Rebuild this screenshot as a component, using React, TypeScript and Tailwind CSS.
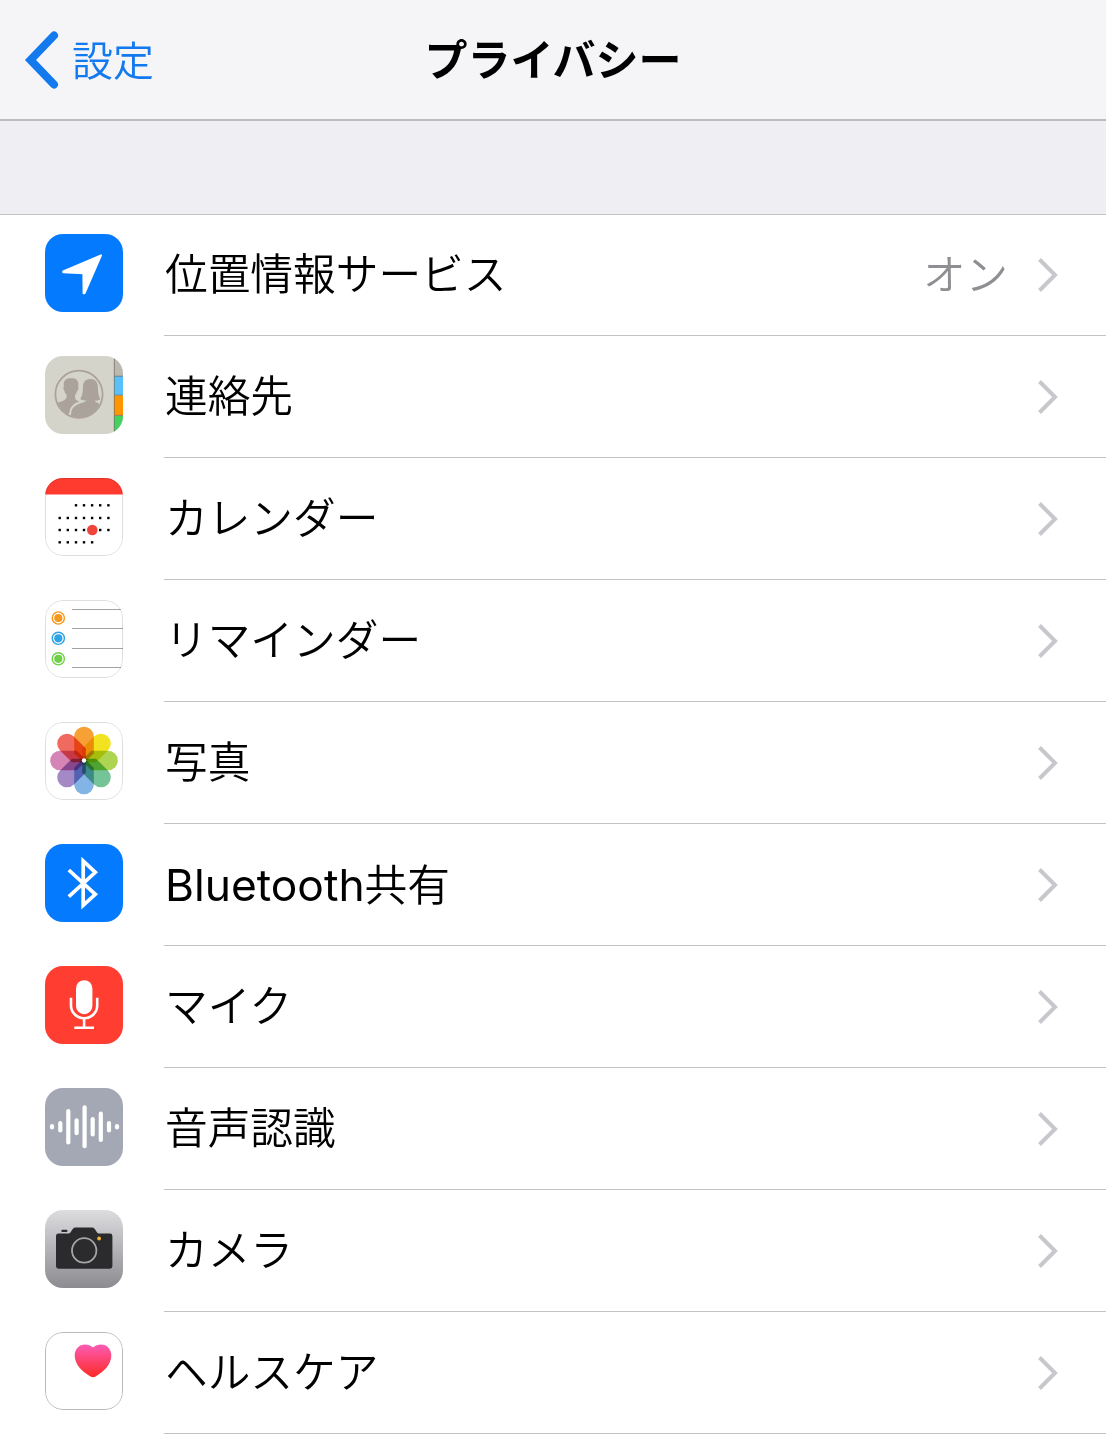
import type { ReactNode } from 'react';

function LocationIcon() {
  return (
    <>
      <rect width="78" height="78" fill="#047aff" />
      <path
        d="M18.2 37.4 L56 21.4 L39.6 59.2 L38.6 59.2 L38.4 39.2 L18.2 38.2 Z"
        fill="#fff"
        stroke="#fff"
        strokeWidth="2"
        strokeLinejoin="round"
      />
    </>
  );
}

function ContactsIcon() {
  return (
    <>
      <rect width="78" height="78" fill="#d5d4cb" />
      <rect x="69" width="9" height="20" fill="#bbb8b0" />
      <rect x="69" y="20" width="9" height="19" fill="#5ac0fb" />
      <rect x="69" y="39.5" width="9" height="20" fill="#ff9500" />
      <rect x="69" y="60" width="9" height="18" fill="#44d15e" />
      <path d="M69.3 0 V78 M69 20.2 H78 M69 39.2 H78 M69 59.4 H78" stroke="#6f6a5c" strokeWidth="1" opacity=".7" />
      <clipPath id="contacts-circle">
        <circle cx="34" cy="38.3" r="23" />
      </clipPath>
      <g clipPath="url(#contacts-circle)" fill="#aca29c">
        <path d="M26.5 22.3 C32 21.8 34 25.5 33.2 30.5 C34 32.5 33.2 34.2 32 35.2 C31.5 37.4 30 38.8 30 40.4 C30 43.4 31.4 44.2 34.5 45.6 C29 47.4 25.5 50.5 24.8 55 L22 62 L5 58 L6 49.5 C9 47 16 46 19.6 43.9 C21.8 42.6 21.8 41 21.4 38.8 C20.2 37.4 19.8 36 19.4 34.8 C18.2 33.6 18 31.6 18.9 30 C18 25 20.4 22.3 26.5 22.3 Z" />
        <path d="M45.4 23 C51.8 23 53 27.7 53 32 C53 37 53.6 40 55.4 43.2 C53.4 44.4 51.4 44.6 49.6 44.7 C50 46.2 53 47 58 49.4 L58 64 L25.6 64 C25.4 54 26.8 50 34 47.4 C38.5 45.8 40.8 45.8 41.2 44.7 C39.4 44.6 37 44.2 35.2 43 C37.2 40 37.9 36.5 37.9 32 C37.9 27.2 39.4 23 45.4 23 Z" />
        <path d="M25.2 62 C25 53 27 50 34.2 46.8 C36 46.1 37.4 45.8 38.4 45.4" fill="none" stroke="#d5d4cb" strokeWidth="1.5" />
      </g>
      <circle cx="34" cy="38.3" r="23.6" fill="none" stroke="#aca29c" strokeWidth="1.8" />
    </>
  );
}

const CALENDAR_COLS = [14.7, 22.8, 31, 39, 47.1, 55.2, 63.4];
const CALENDAR_ROWS = [
  { y: 27.3, from: 2, to: 7 },
  { y: 40, from: 0, to: 7 },
  { y: 52, from: 0, to: 7 },
  { y: 64.3, from: 0, to: 5 },
];

function CalendarIcon() {
  return (
    <>
      <rect width="78" height="78" fill="#fff" />
      <rect width="78" height="16.5" fill="#ff3b30" />
      {CALENDAR_ROWS.map((row) =>
        CALENDAR_COLS.slice(row.from, row.to).map((x) => (
          <rect key={`${x}-${row.y}`} x={x - 1.2} y={row.y - 1.2} width="2.4" height="2.4" fill="#000" />
        )),
      )}
      <circle cx="47.3" cy="52" r="5.3" fill="#f0433a" />
    </>
  );
}

function RemindersIcon() {
  const items = [
    { y: 18, color: '#f7981d' },
    { y: 38.3, color: '#2ea3e6' },
    { y: 58.8, color: '#6fd047' },
  ];
  return (
    <>
      <rect width="78" height="78" fill="#fff" />
      {items.map((item) => (
        <g key={item.y}>
          <circle cx="13.3" cy={item.y} r="6.1" fill="none" stroke={item.color} strokeWidth="1.4" />
          <circle cx="13.3" cy={item.y} r="4.1" fill={item.color} />
        </g>
      ))}
      <path d="M27 9.5 H76 M27 28.5 H78 M27 48.5 H78 M27 67.5 H76" stroke="#a3a3a3" strokeWidth="1" />
    </>
  );
}

const PETALS = ['#f6a035', '#f3e220', '#aed552', '#74c497', '#82b4e6', '#a389c6', '#d584b6', '#f06a60'];

function PhotosIcon() {
  return (
    <>
      <rect width="78" height="78" fill="#fff" />
      <g transform="translate(39 38.5)">
        {PETALS.map((color, i) => (
          <path
            key={color}
            d="M-2.6 0 L-9.8 -7.2 V-24 A9.8 9.8 0 0 1 9.8 -24 V-7.2 L2.6 0 Z"
            fill={color}
            transform={`rotate(${i * 45})`}
            className="mix-blend-multiply"
          />
        ))}
        <circle r="2.2" fill="#fff" />
      </g>
    </>
  );
}

function BluetoothIcon() {
  return (
    <>
      <rect width="78" height="78" fill="#047aff" />
      <path
        d="M23.8 26 L50.3 50.3 L38.2 61.3 V17 L50.3 28.3 L23.8 52.6"
        fill="none"
        stroke="#fff"
        strokeWidth="3.7"
      />
    </>
  );
}

function MicIcon() {
  return (
    <>
      <rect width="78" height="78" fill="#ff3e31" />
      <rect x="31" y="14.2" width="16.4" height="34" rx="8.2" fill="#fff" />
      <path
        d="M26 31.7 V39.5 A13.1 12.8 0 0 0 52.2 39.5 V31.7 M39.1 52 V61.7 M29.3 61.7 H49"
        fill="none"
        stroke="#fff"
        strokeWidth="2.6"
      />
    </>
  );
}

const BARS = [
  [7, 2.8],
  [15.3, 5.7],
  [23.3, 17.8],
  [31.6, 8.5],
  [39.6, 21.5],
  [47.7, 9.7],
  [55.8, 15.2],
  [64, 5.7],
  [72, 2.8],
];

function SpeechIcon() {
  return (
    <>
      <rect width="78" height="78" fill="#a4a8b5" />
      {BARS.map(([x, half]) => (
        <rect key={x} x={x - 2.1} y={38.8 - half} width="4.2" height={half * 2} rx="2.1" fill="#fff" />
      ))}
    </>
  );
}

function CameraIcon() {
  return (
    <>
      <linearGradient id="camera-bg" x1="0" y1="0" x2="0" y2="1">
        <stop offset="0" stopColor="#dddde0" />
        <stop offset="1" stopColor="#8b8b90" />
      </linearGradient>
      <rect width="78" height="78" fill="url(#camera-bg)" />
      <rect x="16.3" y="19.8" width="6.2" height="2.3" rx="1" fill="#2b2b2d" />
      <path
        d="M13.5 23.6 H23.5 C26.8 23.6 26.5 17.6 30.5 17.6 H47 C51 17.6 50.8 23.6 54 23.6 H65 Q67.4 23.6 67.4 26 V56.3 Q67.4 58.7 65 58.7 H13.4 Q11 58.7 11 56.3 V26 Q11 23.6 13.5 23.6 Z"
        fill="#2b2b2d"
      />
      <circle cx="39.2" cy="40.4" r="12.2" fill="none" stroke="#a5a5a8" strokeWidth="1.8" />
      <circle cx="54.1" cy="28.5" r="1.9" fill="#f5b52e" />
    </>
  );
}

function HealthIcon() {
  return (
    <>
      <linearGradient id="heart" x1="0" y1="0" x2="0" y2="1">
        <stop offset="0" stopColor="#fb5cb5" />
        <stop offset="1" stopColor="#fd2a25" />
      </linearGradient>
      <rect width="78" height="78" fill="#fff" />
      <path
        d="M48 15.6 C45.8 13.4 43 12.5 40 12.5 C34 12.5 29.7 17.3 29.7 23.5 C29.7 32.5 37.5 40 45.5 44.4 Q48 46 50.5 44.4 C58.5 40 66.3 32.5 66.3 23.5 C66.3 17.3 62 12.5 56 12.5 C53 12.5 50.2 13.4 48 15.6 Z"
        fill="url(#heart)"
      />
    </>
  );
}

interface Item {
  label: ReactNode;
  icon: ReactNode;
  value?: string;
  outline?: string;
}

const items: Item[] = [
  { label: '位置情報サービス', icon: <LocationIcon />, value: 'オン' },
  { label: '連絡先', icon: <ContactsIcon /> },
  { label: 'カレンダー', icon: <CalendarIcon />, outline: 'rgba(0,0,0,.13)' },
  { label: 'リマインダー', icon: <RemindersIcon />, outline: 'rgba(0,0,0,.13)' },
  { label: '写真', icon: <PhotosIcon />, outline: 'rgba(0,0,0,.13)' },
  {
    label: (
      <>
        <span className="text-[44.3px] leading-none font-normal">Bluetooth</span>共有
      </>
    ),
    icon: <BluetoothIcon />,
  },
  { label: 'マイク', icon: <MicIcon /> },
  { label: '音声認識', icon: <SpeechIcon /> },
  { label: 'カメラ', icon: <CameraIcon /> },
  { label: 'ヘルスケア', icon: <HealthIcon />, outline: 'rgba(0,0,0,.27)' },
];

function Row({ label, icon, value, outline }: Item) {
  return (
    <li className="flex h-[122px] pl-[45px]">
      <svg viewBox="0 0 78 78" className="mt-5 mr-[41px] h-[78px] w-[78px] shrink-0 rounded-[18px]">
        {icon}
        {outline && <rect x=".5" y=".5" width="77" height="77" rx="17.5" fill="none" stroke={outline} />}
      </svg>
      <div className="flex flex-1 items-center border-b border-[#c3c3c6] pr-[47px]">
        <span className="flex-1 pt-0.5 pl-px text-[42.7px] leading-none whitespace-nowrap">{label}</span>
        {value && <span className="mr-[29px] pt-0.5 text-[42.5px] leading-none text-[#8e8e93]">{value}</span>}
        <svg viewBox="0 0 22 36" className="h-9 w-[22px]" fill="none" stroke="#c7c7cc" strokeWidth="4">
          <path d="M2.5 2.5 L18 18 L2.5 33.5" />
        </svg>
      </div>
    </li>
  );
}

export default function App() {
  return (
    <div className="h-[1448px] w-[1106px] overflow-hidden bg-white font-['Inter','Noto_Sans_CJK_JP',sans-serif] font-[350] text-black">
      <header className="grid h-[121px] grid-cols-3 items-center border-b-2 border-[#bcbcbf] bg-[#f5f5f8]">
        <button className="flex items-center pl-6 text-[41px] leading-none text-[#1279ee]">
          <svg viewBox="0 0 36 60" className="mr-3 h-[60px] w-9" fill="none" stroke="#1279ee" strokeWidth="8">
            <path d="M30 5.5 L6.5 30 L30 54.5" strokeLinecap="round" />
          </svg>
          <span className="pt-[3px]">設定</span>
        </button>
        <h1 className="pt-px text-center text-[43px] leading-none font-bold whitespace-nowrap">プライバシー</h1>
      </header>
      <div className="h-[94px] border-b border-[#c3c3c6] bg-[#eeeef3]" />
      <ul className="-mt-px">
        {items.map((item, i) => (
          <Row key={i} {...item} />
        ))}
      </ul>
    </div>
  );
}
